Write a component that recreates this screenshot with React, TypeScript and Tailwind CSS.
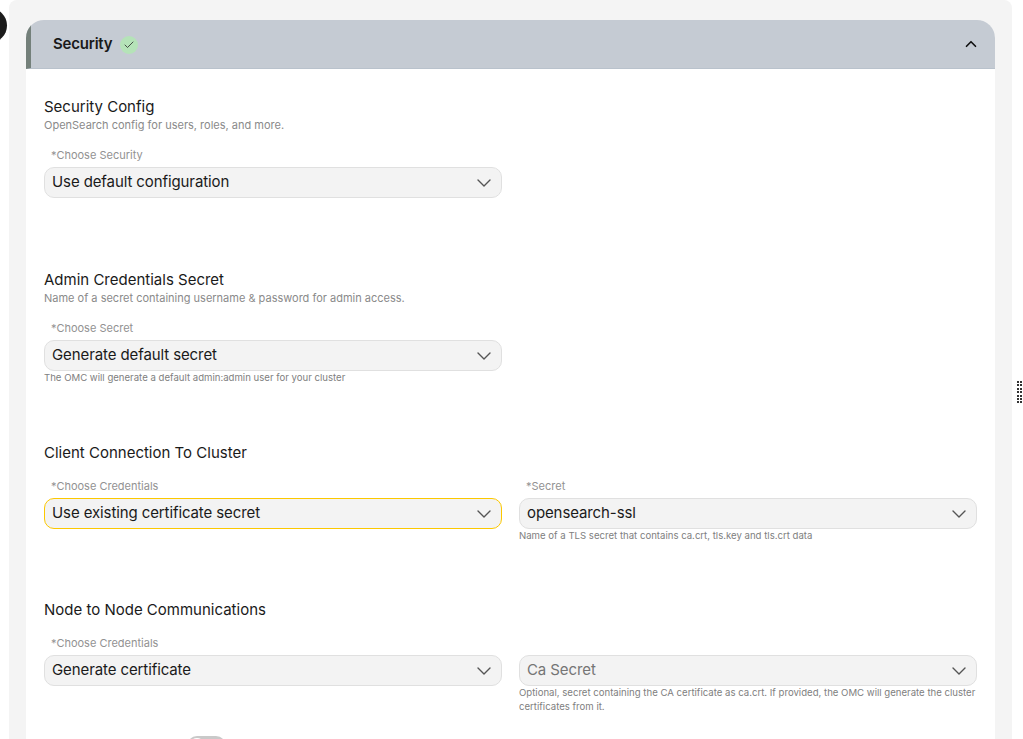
import { Check, ChevronDown, ChevronUp } from "lucide-react"

const font = "font-['Inter','Noto_Sans',sans-serif]"

function Select({ value, focused, muted }: { value: string; focused?: boolean; muted?: boolean }) {
  return (
    <div
      className={`flex h-[31px] items-center justify-between rounded-[10px] bg-[#f3f3f3] pl-[7px] pr-[5px] ${
        focused ? "border-[1.5px] border-[#fcc800]" : "border border-[#e0e0e0]"
      }`}
    >
      <span className={`text-[15px] tracking-[-0.1px] ${muted ? "text-[#757575]" : "text-[#1a1a1a]"}`}>{value}</span>
      <ChevronDown className="h-[24px] w-[24px] text-[#555]" strokeWidth={1.4} />
    </div>
  )
}

function Field({
  label,
  value,
  help,
  focused,
  muted,
}: {
  label?: string
  value: string
  help?: string
  focused?: boolean
  muted?: boolean
}) {
  return (
    <div className="w-[458px]">
      <div className="h-[19px] pl-[7px] text-[11px] leading-[14px] text-[#929292]">{label}</div>
      <Select value={value} focused={focused} muted={muted} />
      {help && <p className="text-[9.6px] leading-[14px] text-[#808080]">{help}</p>}
    </div>
  )
}

export default function App() {
  return (
    <div className={`relative h-[739px] w-[1023px] overflow-hidden bg-white ${font}`}>
      {/* black round button peeking in from the left */}
      <div className="absolute -left-[28px] top-[8px] h-[35px] w-[35px] rounded-full bg-[#1c1c1c]" />

      {/* resize handle */}
      <div className="absolute left-[1017px] top-[381px] grid grid-cols-2 gap-x-[1px] gap-y-[1.4px]">
        {Array.from({ length: 14 }).map((_, i) => (
          <span key={i} className="h-[2px] w-[2px] bg-[#333]" />
        ))}
      </div>

      <div className="ml-[9px] h-full w-[1003px] rounded-t-lg bg-[#f4f4f4] pl-[17px] pr-[17px] pt-[20px]">
        <div className="h-[719px] overflow-hidden rounded-t-[18px] bg-white">
          <div className="flex h-[49px] items-center justify-between border-b border-[#b9c2cc] border-l-[5px] border-l-[#74807a] bg-[#c5cbd3] pl-[22px] pr-[15px]">
            <div className="flex items-center gap-[8px] pt-[1px]">
              <span className="text-[15px] font-semibold tracking-[-0.2px] text-[#1a1a1a]">Security</span>
              <span className="flex h-[18px] w-[18px] items-center justify-center rounded-full bg-[#b5e3b8]">
                <Check className="h-[12px] w-[12px] text-[#2a2a2a]" strokeWidth={1.6} />
              </span>
            </div>
            <ChevronUp className="h-[18px] w-[18px] text-[#111]" strokeWidth={2.2} />
          </div>

          <div className="px-[18px] pt-[28px]">
            <section className="h-[173px]">
              <h3 className="text-[15px] leading-[20px] text-[#1a1a1a]">Security Config</h3>
              <p className="mb-[16px] mt-[1px] text-[11px] leading-[14px] text-[#8a8a8a]">
                OpenSearch config for users, roles, and more.
              </p>
              <Field label="*Choose Security" value="Use default configuration" />
            </section>

            <section className="h-[173px]">
              <h3 className="text-[15px] leading-[20px] text-[#1a1a1a]">Admin Credentials Secret</h3>
              <p className="mb-[16px] mt-[1px] text-[11px] leading-[14px] text-[#8a8a8a]">
                Name of a secret containing username &amp; password for admin access.
              </p>
              <Field
                label="*Choose Secret"
                value="Generate default secret"
                help="The OMC will generate a default admin:admin user for your cluster"
              />
            </section>

            <section className="h-[157px]">
              <h3 className="mb-[16px] text-[15px] leading-[20px] text-[#1a1a1a]">Client Connection To Cluster</h3>
              <div className="flex gap-[17px]">
                <Field label="*Choose Credentials" value="Use existing certificate secret" focused />
                <Field
                  label="*Secret"
                  value="opensearch-ssl"
                  help="Name of a TLS secret that contains ca.crt, tls.key and tls.crt data"
                />
              </div>
            </section>

            <section>
              <h3 className="mb-[16px] text-[15px] leading-[20px] text-[#1a1a1a]">Node to Node Communications</h3>
              <div className="flex gap-[17px]">
                <Field label="*Choose Credentials" value="Generate certificate" />
                <Field
                  value="Ca Secret"
                  muted
                  help="Optional, secret containing the CA certificate as ca.crt. If provided, the OMC will generate the cluster certificates from it."
                />
              </div>
              <div className="ml-[143px] mt-[22px] h-[20px] w-[39px] rounded-full bg-[#c9c9c9] p-[2px]">
                <div className="h-[16px] w-[16px] rounded-full bg-white" />
              </div>
            </section>
          </div>
        </div>
      </div>
    </div>
  )
}
